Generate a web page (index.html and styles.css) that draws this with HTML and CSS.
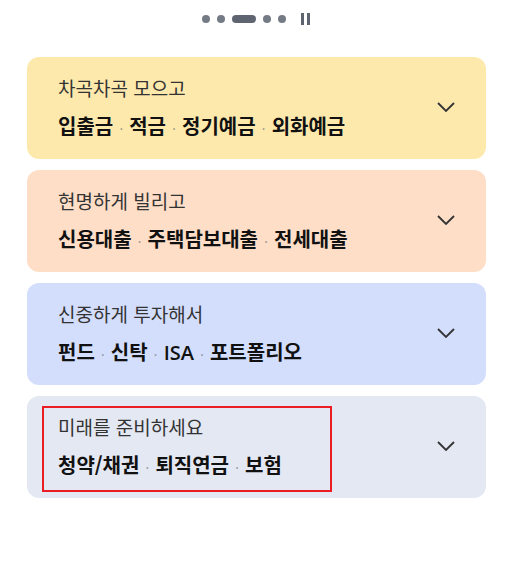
FILE: index.html
```html
<!DOCTYPE html>
<html lang="ko">
<head>
  <meta charset="UTF-8" />
  <title>상품 안내</title>
  <link rel="stylesheet" href="styles.css">
</head>
<body>

  <div class="pager">
    <span class="dot"></span>
    <span class="dot"></span>
    <span class="pill"></span>
    <span class="dot"></span>
    <span class="dot"></span>
    <span class="pause"><i></i><i></i></span>
  </div>

  <div class="list">
    <div class="card yellow">
      <div class="text">
        <p class="title">차곡차곡 모으고</p>
        <p class="items">입출금<span class="sep">·</span>적금<span class="sep">·</span>정기예금<span class="sep">·</span>외화예금</p>
      </div>
      <svg class="chev" viewBox="0 0 18 10" width="18" height="10"><path d="M1 1l8 8 8-8" /></svg>
    </div>

    <div class="card peach">
      <div class="text">
        <p class="title">현명하게 빌리고</p>
        <p class="items">신용대출<span class="sep">·</span>주택담보대출<span class="sep">·</span>전세대출</p>
      </div>
      <svg class="chev" viewBox="0 0 18 10" width="18" height="10"><path d="M1 1l8 8 8-8" /></svg>
    </div>

    <div class="card blue">
      <div class="text">
        <p class="title">신중하게 투자해서</p>
        <p class="items">펀드<span class="sep">·</span>신탁<span class="sep">·</span><span class="latin">ISA</span><span class="sep">·</span>포트폴리오</p>
      </div>
      <svg class="chev" viewBox="0 0 18 10" width="18" height="10"><path d="M1 1l8 8 8-8" /></svg>
    </div>

    <div class="card grey">
      <span class="mark"></span>
      <div class="text">
        <p class="title">미래를 준비하세요</p>
        <p class="items">청약/채권<span class="sep">·</span>퇴직연금<span class="sep">·</span>보험</p>
      </div>
      <svg class="chev" viewBox="0 0 18 10" width="18" height="10"><path d="M1 1l8 8 8-8" /></svg>
    </div>
  </div>

</body>
</html>
```

FILE: styles.css
```css
* {
  box-sizing: border-box;
}

body {
  margin: 0;
  background: #fff;
  font-family: 'Noto Sans CJK KR', 'Noto Sans', sans-serif;
  color: #222;
}

/* page indicator */
.pager {
  height: 38px;
  display: flex;
  justify-content: center;
  align-items: center;
  gap: 7px;
  padding-left: 2px;
}

.dot {
  width: 8px;
  height: 8px;
  border-radius: 50%;
  background: #747b85;
}

.pill {
  width: 24px;
  height: 8px;
  border-radius: 4px;
  background: #5f6570;
}

.pause {
  display: flex;
  gap: 3px;
  margin-left: 8px;
}

.pause i {
  width: 3px;
  height: 12px;
  background: #5f6570;
}

/* cards */
.list {
  display: flex;
  flex-direction: column;
  gap: 11px;
  padding: 19px 23px 0 27px;
}

.card {
  position: relative;
  height: 102px;
  border-radius: 12px;
  padding: 0 31px;
  display: flex;
  justify-content: space-between;
  align-items: center;
}

.card .text {
  align-self: flex-start;
  padding-top: 19px;
}

.yellow { background: #fee9ad; }
.peach { background: #fedec7; }
.blue { background: #d3defd; }
.grey { background: #e4e8f3; }

.title {
  margin: 0;
  font-size: 19px;
  line-height: 24px;
  color: #333;
  font-weight: 400;
}

.items {
  margin: 12px 0 0;
  font-size: 20px;
  line-height: 27px;
  font-weight: 700;
  color: #111;
}

.latin {
  font-family: 'Open Sans', sans-serif;
  font-weight: 600;
}

.sep {
  display: inline-block;
  width: 16px;
  text-align: center;
  font-weight: 400;
  color: #8a8a8a;
  font-size: 13px;
}

.chev {
  fill: none;
  stroke: #333;
  stroke-width: 1.8;
  margin-top: -2px;
}

/* annotation box */
.mark {
  position: absolute;
  left: 15px;
  top: 10px;
  width: 290px;
  height: 86px;
  border: 2px solid #ec1c24;
}
```
